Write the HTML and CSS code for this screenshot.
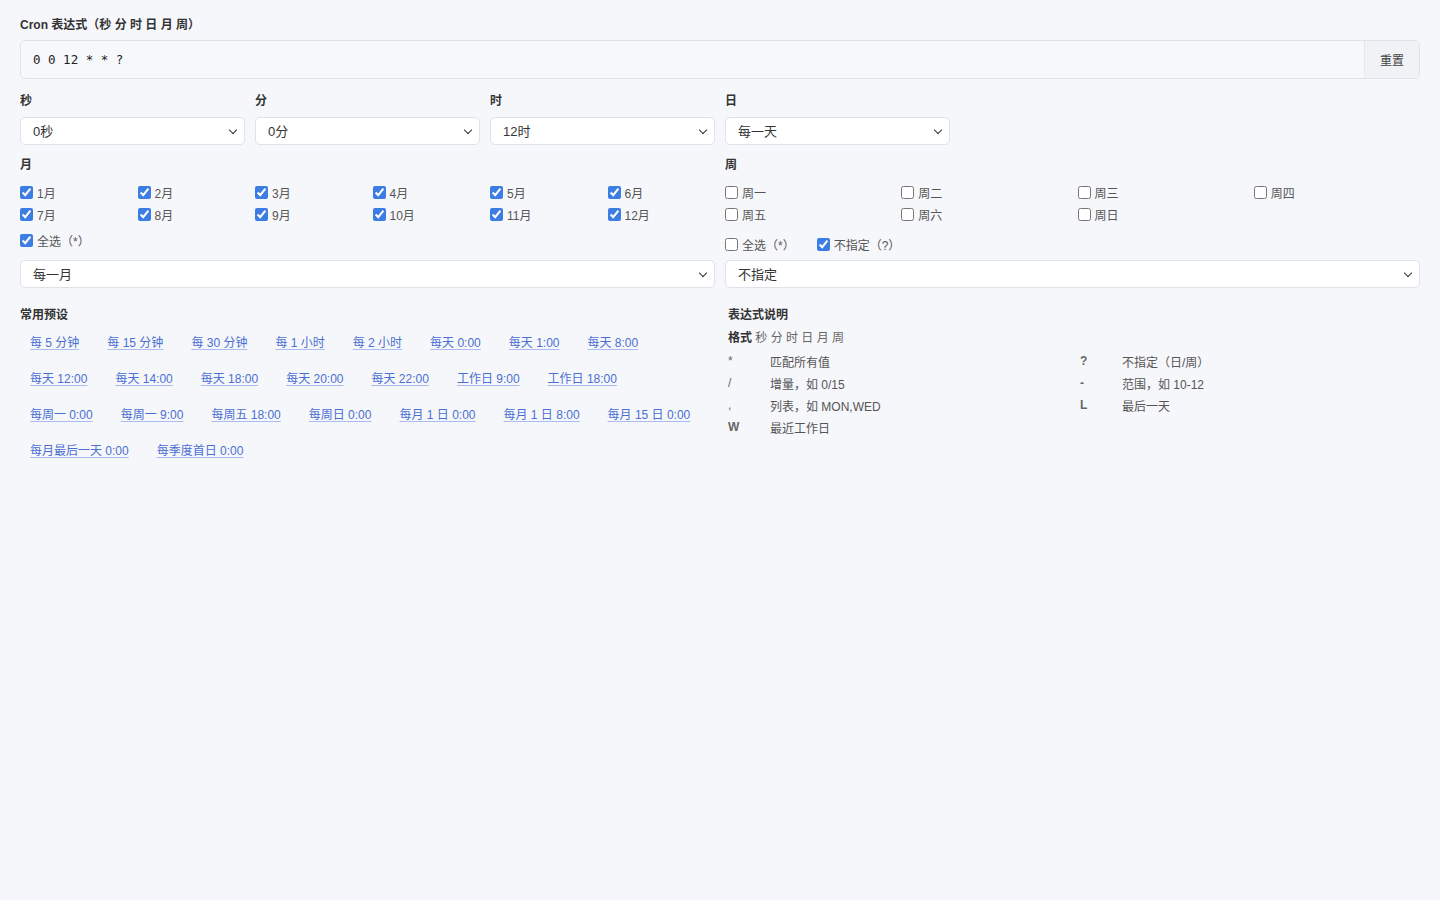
FILE: index.html
```html
<!DOCTYPE html>
<html lang="zh-CN">
<head>
  <meta charset="UTF-8" />
  <meta name="viewport" content="width=device-width, initial-scale=1.0"/>
  <title>Cron 表达式生成器</title>
  <link rel="stylesheet" href="styles.css">
</head>
<body>
  <div class="title">Cron 表达式（秒 分 时 日 月 周）</div>
  <div class="input-group">
    <input type="text" class="cron-input" value="0 0 12 * * ?">
    <button class="reset-btn">重置</button>
  </div>

  <div class="fields">
    <div class="field">
      <label class="field-label">秒</label>
      <div class="select-wrap"><select class="select"><option>0秒</option></select></div>
    </div>
    <div class="field">
      <label class="field-label">分</label>
      <div class="select-wrap"><select class="select"><option>0分</option></select></div>
    </div>
    <div class="field">
      <label class="field-label">时</label>
      <div class="select-wrap"><select class="select"><option>12时</option></select></div>
    </div>
    <div class="field">
      <label class="field-label">日</label>
      <div class="select-wrap"><select class="select"><option>每一天</option></select></div>
    </div>

    <div class="field span-3">
      <label class="field-label">月</label>
      <div class="check-grid months">
        <label class="check"><input type="checkbox" checked>1月</label>
        <label class="check"><input type="checkbox" checked>2月</label>
        <label class="check"><input type="checkbox" checked>3月</label>
        <label class="check"><input type="checkbox" checked>4月</label>
        <label class="check"><input type="checkbox" checked>5月</label>
        <label class="check"><input type="checkbox" checked>6月</label>
        <label class="check"><input type="checkbox" checked>7月</label>
        <label class="check"><input type="checkbox" checked>8月</label>
        <label class="check"><input type="checkbox" checked>9月</label>
        <label class="check"><input type="checkbox" checked>10月</label>
        <label class="check"><input type="checkbox" checked>11月</label>
        <label class="check"><input type="checkbox" checked>12月</label>
      </div>
      <div class="check-actions">
        <label class="check"><input type="checkbox" checked>全选（*）</label>
      </div>
      <div class="select-wrap"><select class="select"><option>每一月</option></select></div>
    </div>

    <div class="field span-3">
      <label class="field-label">周</label>
      <div class="check-grid weeks">
        <label class="check"><input type="checkbox">周一</label>
        <label class="check"><input type="checkbox">周二</label>
        <label class="check"><input type="checkbox">周三</label>
        <label class="check"><input type="checkbox">周四</label>
        <label class="check"><input type="checkbox">周五</label>
        <label class="check"><input type="checkbox">周六</label>
        <label class="check"><input type="checkbox">周日</label>
      </div>
      <div class="check-actions week-actions">
        <label class="check"><input type="checkbox">全选（*）</label>
        <label class="check"><input type="checkbox" checked>不指定（?）</label>
      </div>
      <div class="select-wrap"><select class="select"><option>不指定</option></select></div>
    </div>
  </div>

  <div class="bottom">
    <div class="presets">
      <div class="section-title">常用预设</div>
      <div class="preset-list">
        <a class="preset" href="#">每 5 分钟</a>
        <a class="preset" href="#">每 15 分钟</a>
        <a class="preset" href="#">每 30 分钟</a>
        <a class="preset" href="#">每 1 小时</a>
        <a class="preset" href="#">每 2 小时</a>
        <a class="preset" href="#">每天 0:00</a>
        <a class="preset" href="#">每天 1:00</a>
        <a class="preset" href="#">每天 8:00</a>
        <a class="preset" href="#">每天 12:00</a>
        <a class="preset" href="#">每天 14:00</a>
        <a class="preset" href="#">每天 18:00</a>
        <a class="preset" href="#">每天 20:00</a>
        <a class="preset" href="#">每天 22:00</a>
        <a class="preset" href="#">工作日 9:00</a>
        <a class="preset" href="#">工作日 18:00</a>
        <a class="preset" href="#">每周一 0:00</a>
        <a class="preset" href="#">每周一 9:00</a>
        <a class="preset" href="#">每周五 18:00</a>
        <a class="preset" href="#">每周日 0:00</a>
        <a class="preset" href="#">每月 1 日 0:00</a>
        <a class="preset" href="#">每月 1 日 8:00</a>
        <a class="preset" href="#">每月 15 日 0:00</a>
        <a class="preset" href="#">每月最后一天 0:00</a>
        <a class="preset" href="#">每季度首日 0:00</a>
      </div>
    </div>

    <div class="help">
      <div class="section-title">表达式说明</div>
      <div class="format"><b>格式</b> 秒 分 时 日 月 周</div>
      <div class="help-grid">
        <span class="sym light">*</span><span class="desc">匹配所有值</span>
        <span class="sym">?</span><span class="desc">不指定（日/周）</span>
        <span class="sym light">/</span><span class="desc">增量，如 0/15</span>
        <span class="sym">-</span><span class="desc">范围，如 10-12</span>
        <span class="sym light">,</span><span class="desc">列表，如 MON,WED</span>
        <span class="sym">L</span><span class="desc">最后一天</span>
        <span class="sym">W</span><span class="desc">最近工作日</span>
      </div>
    </div>
  </div>
</body>
</html>
```

FILE: styles.css
```css
* {
  margin: 0;
  padding: 0;
  box-sizing: border-box;
}

body {
  font-family: 'Liberation Sans', 'Noto Sans CJK SC', sans-serif;
  font-size: 12px;
  background: #f6f7fb;
  color: #333;
  padding: 17px 20px 20px;
}

.title {
  font-weight: 700;
  font-size: 12px;
  line-height: 16px;
  margin-bottom: 7px;
}

.input-group {
  display: flex;
  height: 39px;
  border: 1px solid #dfe2e8;
  border-radius: 5px;
  background: #f7f8fa;
  overflow: hidden;
}

.cron-input {
  flex: 1;
  border: none;
  background: transparent;
  padding: 0 12px;
  font-family: 'DejaVu Sans Mono', monospace;
  font-size: 12.5px;
  color: #222;
  outline: none;
}

.reset-btn {
  width: 55px;
  border: none;
  border-left: 1px solid #e6e8ec;
  background: #f1f2f5;
  font-family: inherit;
  font-size: 12px;
  color: #444;
  cursor: pointer;
}

.fields {
  display: grid;
  grid-template-columns: repeat(6, 1fr);
  column-gap: 10px;
  row-gap: 12px;
  margin-top: 14px;
}

.field {
  display: flex;
  flex-direction: column;
}

.span-3 {
  grid-column: span 3;
}

.field-label {
  font-weight: 700;
  font-size: 12px;
  line-height: 16px;
  margin-bottom: 8px;
  color: #333;
}

.select-wrap {
  position: relative;
}

.select-wrap::after {
  content: '';
  position: absolute;
  right: 9px;
  top: 10px;
  width: 5px;
  height: 5px;
  border-right: 1.5px solid #333;
  border-bottom: 1.5px solid #333;
  transform: rotate(45deg);
  pointer-events: none;
}

.select {
  appearance: none;
  height: 28px;
  width: 100%;
  border: 1px solid #dfe2e8;
  border-radius: 5px;
  background: #fff;
  padding: 0 24px 0 12px;
  font-family: inherit;
  font-size: 13px;
  color: #333;
}

.check-grid {
  display: grid;
  column-gap: 10px;
}

.months {
  grid-template-columns: repeat(6, 1fr);
}

.weeks {
  grid-template-columns: repeat(4, 1fr);
}

.check {
  display: flex;
  align-items: center;
  gap: 4px;
  height: 22px;
  font-size: 12px;
  color: #555;
}

.check input {
  width: 13px;
  height: 13px;
  accent-color: #3b7de3;
}

.check-actions {
  display: flex;
  gap: 22px;
  margin: 4px 0 9px;
}

.week-actions {
  margin: 8px 0 5px;
}

.bottom {
  display: grid;
  grid-template-columns: 695px 1fr;
  gap: 10px;
  margin-top: 19px;
}

.section-title {
  font-weight: 700;
  font-size: 12px;
  line-height: 16px;
  color: #333;
}

.preset-list {
  display: flex;
  flex-wrap: wrap;
  gap: 8px;
  margin-top: 4px;
}

.preset {
  display: flex;
  align-items: center;
  height: 28px;
  padding: 0 10px;
  color: #4a6fd1;
  font-size: 12px;
  text-decoration: underline;
  text-decoration-color: #a9bbef;
  text-underline-offset: 2px;
}

.help {
  padding-left: 3px;
}

.format {
  margin-top: 7px;
  line-height: 16px;
  color: #666;
  font-size: 12px;
}

.format b {
  color: #333;
}

.help-grid {
  display: grid;
  grid-template-columns: 42px 310px 42px 1fr;
  grid-auto-rows: 22px;
  align-items: center;
  margin-top: 4px;
  font-size: 12px;
}

.sym {
  color: #666;
  font-weight: 700;
}

.sym.light {
  font-weight: 400;
}

.desc {
  color: #555;
}
```
